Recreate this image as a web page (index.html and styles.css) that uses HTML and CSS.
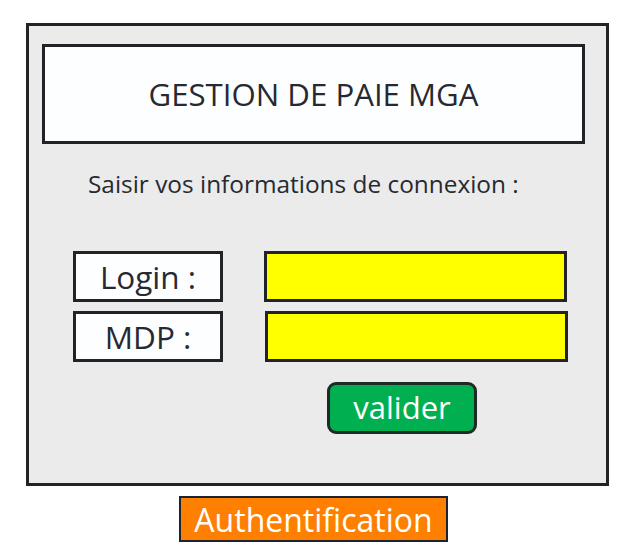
FILE: index.html
```html
<!DOCTYPE html>
<html lang="fr">
<head>
<meta charset="utf-8">
<title>Authentification</title>
<link rel="stylesheet" href="styles.css">
</head>
<body>
<div class="frame">
  <div class="title-box">GESTION DE PAIE MGA</div>
  <p class="hint">Saisir vos informations de connexion :</p>
  <div class="fields">
    <div class="row">
      <div class="label">Login :</div>
      <div class="input"></div>
    </div>
    <div class="row">
      <div class="label">MDP :</div>
      <div class="input input-2"></div>
    </div>
  </div>
  <div class="btn">valider</div>
</div>
<div class="caption">Authentification</div>
</body>
</html>
```

FILE: styles.css
```css
html, body {
  margin: 0;
  padding: 0;
  background: #ffffff;
}
body {
  font-family: "Open Sans", "Noto Sans", sans-serif;
  color: #262a30;
  padding: 23px 0 0 26px;
}
.frame {
  box-sizing: border-box;
  width: 583px;
  height: 463px;
  border: 3px solid #222326;
  background: #ebebeb;
  padding: 18px 0 0 13px;
}
.title-box {
  box-sizing: border-box;
  width: 543px;
  height: 100px;
  border: 3px solid #222326;
  background: #fdfeff;
  display: flex;
  align-items: center;
  justify-content: center;
  font-size: 31.2px;
}
.hint {
  margin: 25px 0 0 46px;
  font-size: 24.4px;
  line-height: 30px;
}
.fields {
  margin: 52px 0 0 31px;
  display: flex;
  flex-direction: column;
  gap: 9px;
}
.row {
  display: flex;
  gap: 41px;
}
.label {
  box-sizing: border-box;
  width: 150px;
  height: 51px;
  border: 3px solid #222326;
  background: #fdfeff;
  display: flex;
  align-items: center;
  justify-content: center;
  font-size: 31.5px;
  padding-bottom: 1px;
}
.input {
  box-sizing: border-box;
  width: 303px;
  height: 51px;
  border: 3px solid #222326;
  background: #ffff00;
}
.input-2 {
  margin-left: 1px;
}
.btn {
  box-sizing: border-box;
  margin: 20px 0 0 285px;
  width: 150px;
  height: 52px;
  border: 3px solid #1e2a26;
  border-radius: 9px;
  background: #00b050;
  color: #ffffff;
  display: flex;
  align-items: center;
  justify-content: center;
  font-size: 31px;
  padding-bottom: 2px;
}
.caption {
  box-sizing: border-box;
  margin: 10px 0 0 153px;
  width: 269px;
  height: 46px;
  border: 2px solid #1c2230;
  background: #ff8000;
  color: #ffffff;
  display: flex;
  align-items: center;
  justify-content: center;
  font-size: 32px;
}
```
